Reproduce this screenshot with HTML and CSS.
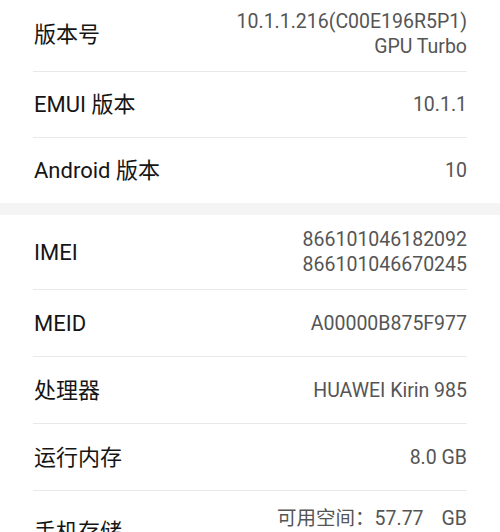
FILE: index.html
```html
<!DOCTYPE html>
<html lang="zh-CN">
<head>
<meta charset="utf-8">
<title>关于手机</title>
<link rel="stylesheet" href="styles.css">
</head>
<body>
<div class="list">
  <section class="group">
    <div class="row">
      <span class="label">版本号</span>
      <span class="value">10.1.1.216(C00E196R5P1)<br>GPU Turbo</span>
    </div>
    <div class="row">
      <span class="label">EMUI 版本</span>
      <span class="value">10.1.1</span>
    </div>
    <div class="row">
      <span class="label">Android 版本</span>
      <span class="value">10</span>
    </div>
  </section>
  <div class="gap"></div>
  <section class="group group-device">
    <div class="row">
      <span class="label">IMEI</span>
      <span class="value">866101046182092<br>866101046670245</span>
    </div>
    <div class="row">
      <span class="label">MEID</span>
      <span class="value">A00000B875F977</span>
    </div>
    <div class="row">
      <span class="label">处理器</span>
      <span class="value">HUAWEI Kirin 985</span>
    </div>
    <div class="row">
      <span class="label">运行内存</span>
      <span class="value">8.0 GB</span>
    </div>
    <div class="row row-storage">
      <span class="label">手机存储</span>
      <span class="value">可用空间：57.77<span class="unit">GB</span><br>总容量：128<span class="unit">GB</span></span>
    </div>
  </section>
</div>
</body>
</html>
```

FILE: styles.css
```css
html, body {
  margin: 0;
  padding: 0;
  background: #ffffff;
  overflow: hidden;
}

body {
  font-family: Roboto, "Noto Sans CJK SC", sans-serif;
  -webkit-font-smoothing: antialiased;
}

.list {
  margin-top: -3px;
}

.group {
  padding: 0 33px;
}

.row {
  box-sizing: border-box;
  min-height: 66px;
  padding: 12px 0;
  display: flex;
  align-items: center;
  justify-content: space-between;
  border-bottom: 1px solid #e9e9e9;
}

.row:last-child {
  border-bottom: none;
  min-height: 65px;
}

.group-device .row {
  min-height: 67px;
}

.row-storage {
  padding-top: 15px;
}

.label {
  font-size: 22px;
  line-height: 25px;
  color: #151515;
  padding-left: 1px;
}

.value {
  font-size: 19.5px;
  line-height: 25px;
  color: #555555;
  text-align: right;
}

.unit {
  margin-left: 18px;
}

.gap {
  height: 12px;
  background: #f4f4f4;
}
```
